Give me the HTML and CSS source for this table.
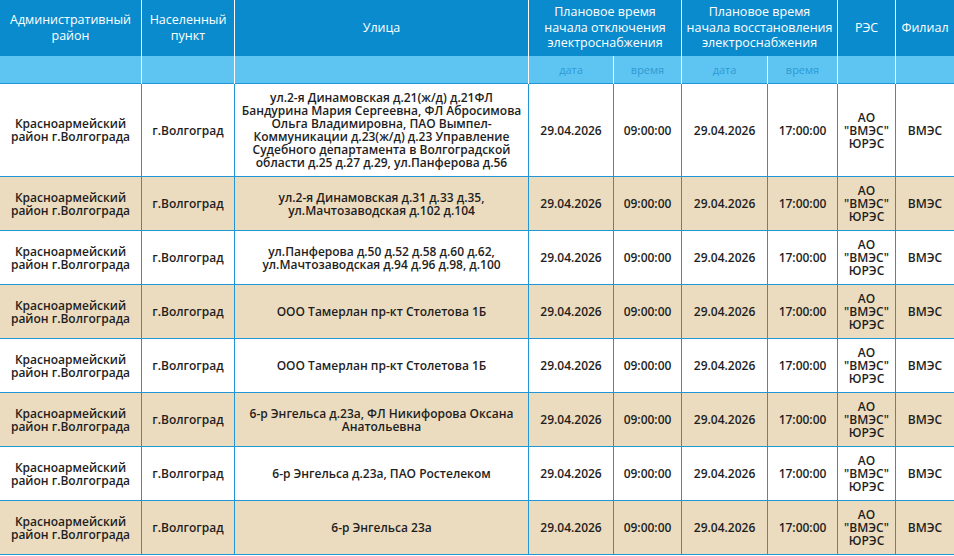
FILE: index.html
```html
<!DOCTYPE html>
<html lang="ru">
<head>
<meta charset="utf-8">
<title>Плановые отключения</title>
<link rel="stylesheet" href="styles.css">
</head>
<body>
<table class="grid">
  <colgroup>
    <col class="c-area"><col class="c-town"><col class="c-street">
    <col class="c-d1"><col class="c-t1"><col class="c-d2"><col class="c-t2">
    <col class="c-res"><col class="c-fil">
  </colgroup>
  <thead>
    <tr class="head">
      <th>Административный район</th>
      <th>Населенный пункт</th>
      <th>Улица</th>
      <th colspan="2">Плановое время начала отключения электроснабжения</th>
      <th colspan="2">Плановое время начала восстановления электроснабжения</th>
      <th>РЭС</th>
      <th>Филиал</th>
    </tr>
    <tr class="sub">
      <th></th><th></th><th></th>
      <th>дата</th><th>время</th><th>дата</th><th>время</th>
      <th></th><th></th>
    </tr>
  </thead>
  <tbody>
    <tr>
      <td>Красноармейский район г.Волгограда</td><td>г.Волгоград</td>
      <td>ул.2-я Динамовская д.21(ж/д) д.21ФЛ Бандурина Мария Сергеевна, ФЛ Абросимова Ольга Владимировна, ПАО Вымпел-Коммуникации д.23(ж/д) д.23 Управление Судебного департамента в Волгоградской области д.25 д.27 д.29, ул.Панферова д.56</td>
      <td>29.04.2026</td><td>09:00:00</td><td>29.04.2026</td><td>17:00:00</td><td>АО "ВМЭС" ЮРЭС</td><td>ВМЭС</td>
    </tr>
    <tr class="alt">
      <td>Красноармейский район г.Волгограда</td><td>г.Волгоград</td>
      <td>ул.2-я Динамовская д.31 д.33 д.35, ул.Мачтозаводская д.102 д.104</td>
      <td>29.04.2026</td><td>09:00:00</td><td>29.04.2026</td><td>17:00:00</td><td>АО "ВМЭС" ЮРЭС</td><td>ВМЭС</td>
    </tr>
    <tr>
      <td>Красноармейский район г.Волгограда</td><td>г.Волгоград</td>
      <td>ул.Панферова д.50 д.52 д.58 д.60 д.62, ул.Мачтозаводская д.94 д.96 д.98, д.100</td>
      <td>29.04.2026</td><td>09:00:00</td><td>29.04.2026</td><td>17:00:00</td><td>АО "ВМЭС" ЮРЭС</td><td>ВМЭС</td>
    </tr>
    <tr class="alt">
      <td>Красноармейский район г.Волгограда</td><td>г.Волгоград</td>
      <td>ООО Тамерлан пр-кт Столетова 1Б</td>
      <td>29.04.2026</td><td>09:00:00</td><td>29.04.2026</td><td>17:00:00</td><td>АО "ВМЭС" ЮРЭС</td><td>ВМЭС</td>
    </tr>
    <tr>
      <td>Красноармейский район г.Волгограда</td><td>г.Волгоград</td>
      <td>ООО Тамерлан пр-кт Столетова 1Б</td>
      <td>29.04.2026</td><td>09:00:00</td><td>29.04.2026</td><td>17:00:00</td><td>АО "ВМЭС" ЮРЭС</td><td>ВМЭС</td>
    </tr>
    <tr class="alt">
      <td>Красноармейский район г.Волгограда</td><td>г.Волгоград</td>
      <td>6-р Энгельса д.23а, ФЛ Никифорова Оксана Анатольевна</td>
      <td>29.04.2026</td><td>09:00:00</td><td>29.04.2026</td><td>17:00:00</td><td>АО "ВМЭС" ЮРЭС</td><td>ВМЭС</td>
    </tr>
    <tr>
      <td>Красноармейский район г.Волгограда</td><td>г.Волгоград</td>
      <td>6-р Энгельса д.23а, ПАО Ростелеком</td>
      <td>29.04.2026</td><td>09:00:00</td><td>29.04.2026</td><td>17:00:00</td><td>АО "ВМЭС" ЮРЭС</td><td>ВМЭС</td>
    </tr>
    <tr class="alt">
      <td>Красноармейский район г.Волгограда</td><td>г.Волгоград</td>
      <td>6-р Энгельса 23а</td>
      <td>29.04.2026</td><td>09:00:00</td><td>29.04.2026</td><td>17:00:00</td><td>АО "ВМЭС" ЮРЭС</td><td>ВМЭС</td>
    </tr>
  </tbody>
</table>
</body>
</html>
```

FILE: styles.css
```css
html, body {
  margin: 0;
  padding: 0;
  background: #ffffff;
}

.grid {
  border-collapse: collapse;
  table-layout: fixed;
  width: 955px;
  margin-left: -1px;
  font-family: "Open Sans", "Liberation Sans", sans-serif;
}

.c-area { width: 142px; }
.c-town { width: 93px; }
.c-street { width: 294px; }
.c-d1 { width: 85px; }
.c-t1 { width: 68px; }
.c-d2 { width: 86px; }
.c-t2 { width: 70px; }
.c-res { width: 58px; }
.c-fil { width: 59px; }

.head th {
  background: #0a8bcd;
  color: #ffffff;
  font-weight: 400;
  font-size: 12.5px;
  line-height: 15.5px;
  padding: 4px 4px 5px;
  height: 47px;
  border-left: 1px solid #ffffff;
  border-right: 1px solid #ffffff;
  text-align: center;
  vertical-align: middle;
}

.sub th {
  background: #5ec5f3;
  color: #2f9ad3;
  font-weight: 400;
  font-size: 11px;
  line-height: 14px;
  height: 27px;
  padding: 0;
  border-left: 1px solid #ffffff;
  border-right: 1px solid #ffffff;
  text-align: center;
  vertical-align: middle;
}

tbody td {
  border: 1px solid #2196d6;
  color: #1e1e1e;
  font-size: 12px;
  font-weight: 600;
  line-height: 13px;
  padding: 7px 5px;
  text-align: center;
  vertical-align: middle;
  background: #ffffff;
}

tbody tr.alt td {
  background: #ecdcbf;
}
```
